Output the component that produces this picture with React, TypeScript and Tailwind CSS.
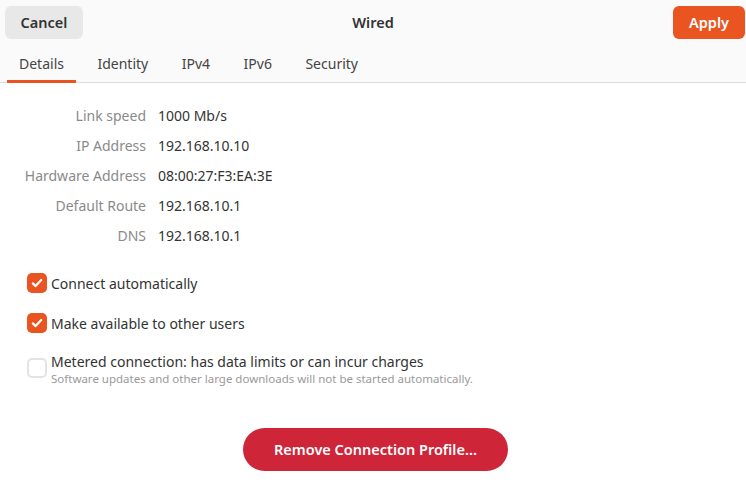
import React from "react";

const font = { fontFamily: '"Noto Sans", "Open Sans", sans-serif' };

function Check({ checked }: { checked: boolean }) {
  if (checked) {
    return (
      <div className="w-[20px] h-[20px] rounded-[5px] bg-[#e95420] flex items-center justify-center shrink-0">
        <svg width="14" height="14" viewBox="0 0 14 14" fill="none">
          <path d="M2.8 7.4 L5.6 10.1 L11.2 4" stroke="white" strokeWidth="2.2" strokeLinecap="round" strokeLinejoin="round" />
        </svg>
      </div>
    );
  }
  return <div className="w-[20px] h-[20px] rounded-[5px] border-2 border-[#e3e3e3] bg-white shrink-0" />;
}

export default function App() {
  const rows: [string, string][] = [
    ["Link speed", "1000 Mb/s"],
    ["IP Address", "192.168.10.10"],
    ["Hardware Address", "08:00:27:F3:EA:3E"],
    ["Default Route", "192.168.10.1"],
    ["DNS", "192.168.10.1"],
  ];
  const tabs = ["Details", "Identity", "IPv4", "IPv6", "Security"];
  return (
    <div className="w-[746px] h-[492px] bg-white flex flex-col text-[#3d3d3d]" style={font}>
      <div className="bg-[#fafafa] border-b border-[#dcdcdc]">
        <div className="h-[50px] flex items-start justify-between pt-[6px] px-[5px] pr-[1px] relative">
          <button className="h-[33px] w-[78px] rounded-[6px] bg-[#e8e8e8] text-[14.5px] font-semibold text-[#333]">Cancel</button>
          <div className="absolute left-0 right-0 top-[12px] text-center text-[14.5px] font-semibold text-[#333] pointer-events-none">Wired</div>
          <button className="h-[33px] w-[72px] rounded-[6px] bg-[#e95420] text-[14.5px] font-semibold text-white">Apply</button>
        </div>
        <div className="h-[32px] flex pl-[7px] gap-[9.5px]">
          {tabs.map((t, i) => (
            <div key={t} className="relative px-[12px] h-full flex items-start pt-[3px] text-[14px] text-[#444]">
              {t}
              {i === 0 && <div className="absolute left-0 right-0 bottom-[-1px] h-[3px] bg-[#e95420]" />}
            </div>
          ))}
        </div>
      </div>

      <div className="pt-[17px] grid grid-cols-[146px_1fr] gap-x-[12px] text-[14px]">
        {rows.map(([k, v]) => (
          <React.Fragment key={k}>
            <div className="h-[30px] flex items-center justify-end text-[#8a8a8a]">{k}</div>
            <div className="h-[30px] flex items-center text-[#333]">{v}</div>
          </React.Fragment>
        ))}
      </div>

      <div className="pl-[27px] pt-[23px] flex flex-col text-[14px] text-[#333]">
        <div className="h-[20px] flex items-center gap-[4px]">
          <Check checked />
          <span>Connect automatically</span>
        </div>
        <div className="h-[20px] mt-[20px] flex items-center gap-[4px]">
          <Check checked />
          <span>Make available to other users</span>
        </div>
        <div className="mt-[19px] flex items-start gap-[4px]">
          <div className="pt-[6px]"><Check checked={false} /></div>
          <div className="flex flex-col">
            <span className="leading-[20px]">Metered connection: has data limits or can incur charges</span>
            <span className="leading-[14px] text-[11.5px] text-[#9a9a9a]">Software updates and other large downloads will not be started automatically.</span>
          </div>
        </div>
      </div>

      <div className="flex justify-center pt-[42px] pl-[5px]">
        <button className="h-[43px] w-[265px] rounded-full bg-[#cf2539] text-white font-semibold text-[14.5px]">Remove Connection Profile…</button>
      </div>
    </div>
  );
}
